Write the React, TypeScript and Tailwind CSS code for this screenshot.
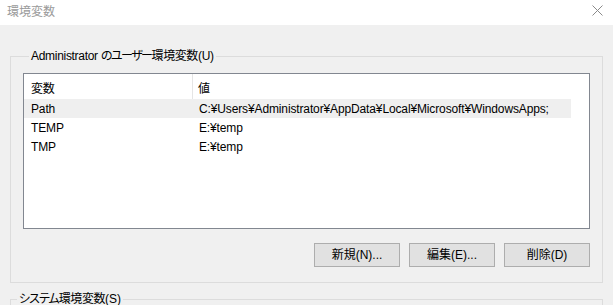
const FONT = "font-['Liberation_Sans','Noto_Sans_CJK_JP',sans-serif] [font-feature-settings:'palt']"

type Row = { name: string; value: string; selected?: boolean }

const rows: Row[] = [
  {
    name: 'Path',
    value: 'C:¥Users¥Administrator¥AppData¥Local¥Microsoft¥WindowsApps;',
    selected: true,
  },
  { name: 'TEMP', value: 'E:¥temp' },
  { name: 'TMP', value: 'E:¥temp' },
]

function DialogButton({ label }: { label: string }) {
  return (
    <button className="w-[86px] h-[24px] bg-[#e1e1e1] border border-[#adadad] text-[12px] text-black leading-none">
      {label}
    </button>
  )
}

export default function App() {
  return (
    <div className={`w-[613px] h-[305px] overflow-hidden bg-[#f0f0f0] text-black ${FONT}`}>
      {/* title bar */}
      <div className="h-[25px] bg-white flex items-center justify-between pl-[7px] pr-[10px]">
        <span className="text-[12px] text-[#9a9a9a] leading-none -mt-[2px]">環境変数</span>
        <svg width="11" height="11" viewBox="0 0 11 11" className="-mt-[4px]">
          <path d="M0.5 0.5 L10.5 10.5 M10.5 0.5 L0.5 10.5" stroke="#8a8a8a" strokeWidth="1" />
        </svg>
      </div>

      <div className="pl-[10px] pr-[10px] pt-[24px]">
        <fieldset className="border border-[#dcdcdc] h-[234px] px-[12px] pt-[10px]">
          <legend className="ml-[6px] px-[2px] text-[12px] leading-[14px] tracking-[-0.3px]">
            Administrator <span className="tracking-[-1.5px]">のユーザー</span>
            <span className="tracking-[-0.4px]">環境変数</span>(U)
          </legend>

          {/* list view */}
          <div className="h-[156px] bg-white border border-[#828790] text-[12px] tracking-[-0.13px]">
            <div className="flex h-[25px] w-[547px]">
              <div className="w-[169px] border-r border-[#e5e5e5] pl-[7px] pt-[6px]">変数</div>
              <div className="flex-1 pl-[5px] pt-[6px]">値</div>
            </div>
            {rows.map((r) => (
              <div
                key={r.name}
                className={`flex h-[19px] w-[547px] items-center ${r.selected ? 'bg-[#efefef]' : ''}`}
              >
                <div className="w-[169px] pl-[7px]">{r.name}</div>
                <div className="flex-1 pl-[6px] whitespace-nowrap">{r.value}</div>
              </div>
            ))}
          </div>

          <div className="flex justify-end gap-[9px] mt-[14px]">
            <DialogButton label="新規(N)..." />
            <DialogButton label="編集(E)..." />
            <DialogButton label="削除(D)" />
          </div>
        </fieldset>

        <fieldset className="mt-[9px] border border-[#dcdcdc] h-[40px]">
          <legend className="ml-[6px] px-[2px] text-[12px] leading-[14px]">
            <span className="tracking-[-1px]">システム</span>
            <span className="tracking-[-0.4px]">環境変数</span>(S)
          </legend>
        </fieldset>
      </div>
    </div>
  )
}
